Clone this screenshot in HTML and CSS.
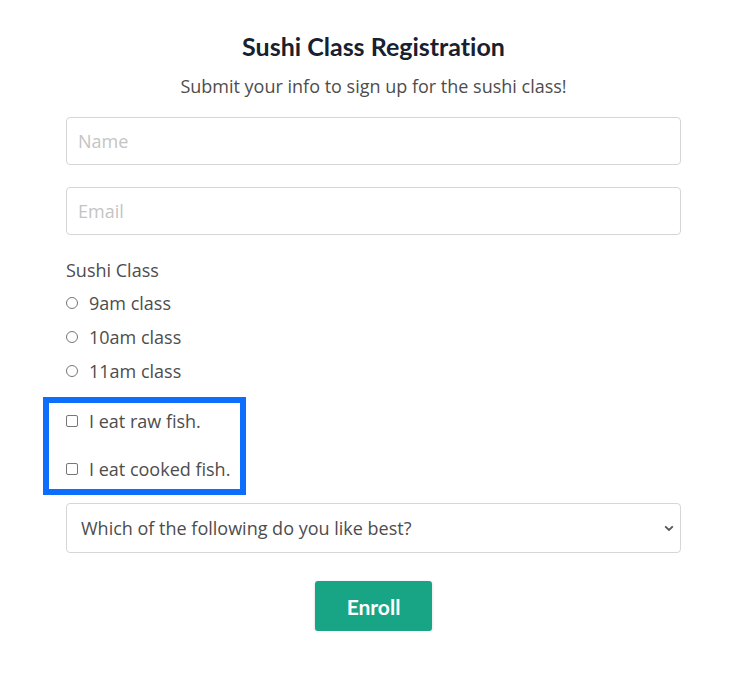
FILE: index.html
```html
<!DOCTYPE html>
<html lang="en">
<head>
<meta charset="utf-8">
<title>Sushi Class Registration</title>
<link rel="stylesheet" href="styles.css">
</head>
<body>
<div class="page">
  <form class="form">
    <h1 class="title">Sushi Class Registration</h1>
    <p class="subtitle">Submit your info to sign up for the sushi class!</p>
    <input class="field" type="text" placeholder="Name">
    <input class="field field-email" type="email" placeholder="Email">
    <div class="group-label">Sushi Class</div>
    <div class="options">
      <label class="option"><input class="radio" type="radio" name="cls"><span>9am class</span></label>
      <label class="option"><input class="radio" type="radio" name="cls"><span>10am class</span></label>
      <label class="option"><input class="radio" type="radio" name="cls"><span>11am class</span></label>
    </div>
    <div class="highlight">
      <label class="option check-row"><input class="check" type="checkbox"><span>I eat raw fish.</span></label>
      <label class="option check-row"><input class="check" type="checkbox"><span>I eat cooked fish.</span></label>
    </div>
    <select class="select">
      <option>Which of the following do you like best?</option>
    </select>
    <div class="actions">
      <button class="btn" type="button">Enroll</button>
    </div>
  </form>
</div>
</body>
</html>
```
FILE: styles.css
```css
* { box-sizing: border-box; }
html, body { margin: 0; padding: 0; background: #fff; }
body {
  font-family: "Open Sans", "Liberation Sans", sans-serif;
  color: #4d4d4d;
}
.page {
  display: flex;
  justify-content: center;
  padding-left: 5px;
}
.form {
  width: 615px;
  display: flex;
  flex-direction: column;
}
.title {
  margin: 31px 0 0;
  font-family: "Lato", "Open Sans", sans-serif;
  font-weight: 700;
  font-size: 25px;
  line-height: 30px;
  color: #19202e;
  text-align: center;
  font-variant-ligatures: none;
}
.subtitle {
  margin: 13px 0 0;
  font-size: 18px;
  line-height: 24px;
  text-align: center;
  color: #4d4d4d;
}
.field {
  margin-top: 19px;
  height: 48px;
  width: 100%;
  border: 1px solid #d6d6d6;
  border-radius: 4px;
  padding: 0 11px;
  font-family: inherit;
  font-size: 18px;
  color: #4d4d4d;
  outline: none;
}
.field::placeholder { color: #c4c4c4; }
.field-email { margin-top: 22px; }
.group-label {
  margin-top: 23px;
  font-size: 18px;
  line-height: 24px;
}
.options {
  margin-top: 4px;
  display: flex;
  flex-direction: column;
}
.option {
  display: flex;
  align-items: center;
  gap: 11px;
  height: 34px;
  font-size: 18px;
}
.radio, .check {
  appearance: none;
  -webkit-appearance: none;
  margin: 0;
  width: 12px;
  height: 12px;
  border: 1px solid #767676;
  background: #fff;
  flex: none;
}
.radio { border-radius: 50%; }
.check { border-radius: 2px; }
.highlight {
  margin: 9px 0 0 -23px;
  width: 203px;
  border: 6px solid #0d6efd;
  padding: 6px 6px 8px 17px;
  display: flex;
  flex-direction: column;
  gap: 24px;
}
.check-row { height: 24px; white-space: nowrap; }
.select {
  margin-top: 8px;
  height: 50px;
  width: 100%;
  appearance: none;
  -webkit-appearance: none;
  border: 1px solid #d6d6d6;
  border-radius: 4px;
  background-color: #fff;
  background-image: url("data:image/svg+xml,%3Csvg xmlns='http://www.w3.org/2000/svg' width='10' height='7' viewBox='0 0 10 7'%3E%3Cpath d='M1.2 1.3 L5 5 L8.8 1.3' fill='none' stroke='%23555' stroke-width='1.8'/%3E%3C/svg%3E");
  background-repeat: no-repeat;
  background-position: right 6px center;
  padding: 0 30px 0 14px;
  font-family: inherit;
  font-size: 18px;
  color: #4d4d4d;
  outline: none;
}
.actions {
  margin-top: 28px;
  display: flex;
  justify-content: center;
}
.btn {
  width: 117px;
  height: 50px;
  border: none;
  border-radius: 3px;
  background: #17a585;
  color: #fff;
  font-family: "Lato", "Open Sans", sans-serif;
  font-weight: 700;
  font-size: 21px;
  box-shadow: 0 1px 3px rgba(0,0,0,0.18);
  cursor: pointer;
}
```
